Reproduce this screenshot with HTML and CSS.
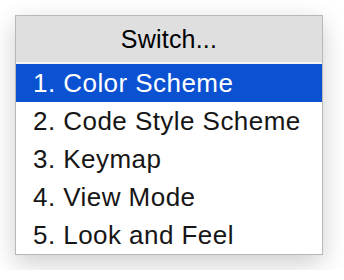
FILE: index.html
```html
<!DOCTYPE html>
<html lang="en">
<head>
    <meta charset="UTF-8">
    <meta name="viewport" content="width=device-width, initial-scale=1.0">
    <title>Switch</title>
    <link rel="stylesheet" href="styles.css">
</head>
<body>

    <div class="popup">
        <div class="title">Switch...</div>
        <ul class="items">
            <li class="item selected">1. Color Scheme</li>
            <li class="item">2. Code Style Scheme</li>
            <li class="item">3. Keymap</li>
            <li class="item">4. View Mode</li>
            <li class="item">5. Look and Feel</li>
        </ul>
    </div>

</body>
</html>
```

FILE: styles.css
```css
body {
    margin: 0;
    padding: 15px;
    background: #ffffff;
    font-family: "Liberation Sans", Arial, sans-serif;
}
.popup {
    width: 308px;
    box-sizing: border-box;
    background: white;
    border: 1px solid #b8b8b8;
    box-shadow: 0px 8px 24px rgba(0, 0, 0, 0.2);
}
.title {
    height: 46px;
    line-height: 46px;
    text-align: center;
    font-size: 25px;
    letter-spacing: 0.2px;
    color: #000;
    background: #dfdfdf;
    border-bottom: 2px solid #f4f4f4;
}
.items {
    list-style: none;
    margin: 0;
    padding: 0;
}
.item {
    height: 38px;
    line-height: 38px;
    padding-left: 17px;
    font-size: 26px;
    letter-spacing: 0.45px;
    color: #161616;
}
.selected {
    background: #0a52d2;
    color: white;
}
```
